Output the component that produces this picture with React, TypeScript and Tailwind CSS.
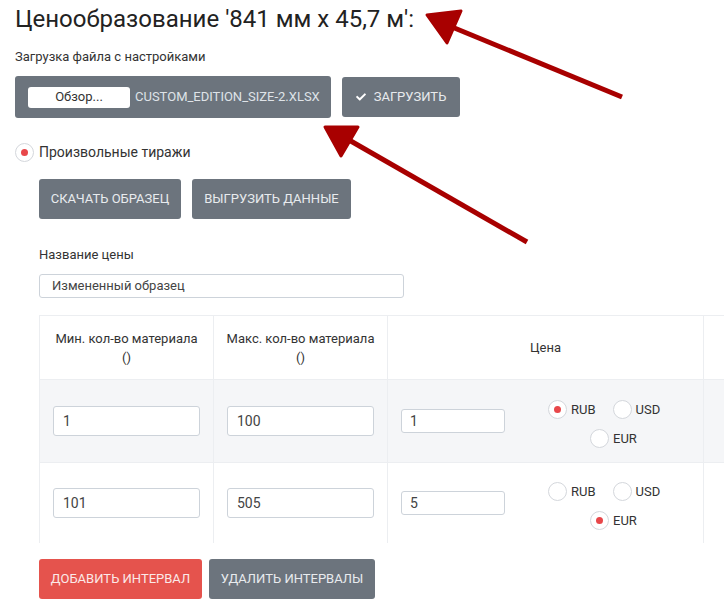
import React from "react";
import { FaCheck } from "react-icons/fa";

function Radio({ checked }: { checked?: boolean }) {
  return (
    <span className="flex h-[19px] w-[19px] shrink-0 items-center justify-center rounded-full border border-[#d4d7dc] bg-white">
      {checked && <span className="h-[7px] w-[7px] rounded-full bg-[#e8474a]" />}
    </span>
  );
}

function Cur({ label, checked }: { label: string; checked?: boolean }) {
  return (
    <span className="flex items-center gap-[4px]">
      <Radio checked={checked} />
      <span className="text-[13px] text-[#333]">{label}</span>
    </span>
  );
}

function Row({ a, b, c, cur, bg, h }: { a: string; b: string; c: string; cur: string; bg: string; h: string }) {
  return (
    <div className={`flex border-t border-[#eceef1] ${bg} ${h}`}>
      <div className="flex w-[174px] shrink-0 items-center border-l border-[#eceef1] px-[13px]">
        <div className="flex h-[30px] w-full items-center rounded-[3px] border border-[#cdd3da] bg-white px-[9px] text-[14px] text-[#444]">{a}</div>
      </div>
      <div className="flex w-[174px] shrink-0 items-center border-l border-[#eceef1] px-[13px]">
        <div className="flex h-[30px] w-full items-center rounded-[3px] border border-[#cdd3da] bg-white px-[9px] text-[14px] text-[#444]">{b}</div>
      </div>
      <div className="flex w-[316px] shrink-0 items-center border-l border-[#eceef1] pl-[13px]">
        <div className="flex h-[24px] w-[104px] items-center rounded-[3px] border border-[#cdd3da] bg-white px-[8px] text-[14px] text-[#444]">{c}</div>
        <div className="ml-[43px] mt-[6px] flex flex-col gap-[9px]">
          <div className="flex gap-[17px]">
            <Cur label="RUB" checked={cur === "RUB"} />
            <Cur label="USD" checked={cur === "USD"} />
          </div>
          <div className="flex pl-[42px]">
            <Cur label="EUR" checked={cur === "EUR"} />
          </div>
        </div>
      </div>
      <div className="w-[120px] shrink-0 border-l border-[#eceef1]" />
    </div>
  );
}

export default function App() {
  return (
    <div className="relative h-[615px] w-[724px] overflow-hidden bg-white pl-[15px]" style={{ fontFamily: "Roboto, 'Noto Sans', sans-serif" }}>
      <h1 className="text-[24px] leading-[38px] text-[#222]">Ценообразование '841 мм x 45,7 м':</h1>
      <div className="mt-[10px] text-[13px] leading-[18px] text-[#333]">Загрузка файла с настройками</div>

      <div className="mt-[10px] flex items-center gap-[11px]">
        <div className="flex h-[42px] w-[316px] items-center rounded-[3px] bg-[#6c747d] pl-[13px]">
          <div className="flex h-[21px] w-[102px] items-center justify-center rounded-[3px] bg-white text-[13px] text-[#333]">Обзор...</div>
          <span className="ml-[5px] text-[13px] text-[#dfe3e8]">CUSTOM_EDITION_SIZE-2.XLSX</span>
        </div>
        <div className="flex h-[40px] w-[118px] items-center justify-center gap-[8px] rounded-[3px] bg-[#6c747d] text-[13px] text-[#e8ebee]">
          <FaCheck className="h-[10px] w-[10px] text-white" />
          <span>ЗАГРУЗИТЬ</span>
        </div>
      </div>

      <div className="mt-[24px] flex items-center gap-[5px]">
        <Radio checked />
        <span className="text-[14px] text-[#333]">Произвольные тиражи</span>
      </div>

      <div className="ml-[24px] mt-[16px] flex gap-[11px]">
        <div className="flex h-[40px] w-[142px] items-center justify-center rounded-[3px] bg-[#6c747d] text-[13px] text-[#e8ebee]">СКАЧАТЬ ОБРАЗЕЦ</div>
        <div className="flex h-[40px] w-[159px] items-center justify-center rounded-[3px] bg-[#6c747d] text-[13px] text-[#e8ebee]">ВЫГРУЗИТЬ ДАННЫЕ</div>
      </div>

      <div className="ml-[24px] mt-[27px] text-[13px] leading-[18px] text-[#333]">Название цены</div>
      <div className="ml-[24px] mt-[10px] flex h-[24px] w-[365px] items-center rounded-[3px] border border-[#cdd3da] bg-white px-[12px] text-[13px] text-[#444]">Измененный образец</div>

      <div className="ml-[24px] mt-[17px] w-[800px]">
        <div className="flex h-[64px] border-t border-[#eceef1] text-[13px] leading-[19px] text-[#333]">
          <div className="flex w-[174px] shrink-0 flex-col items-center justify-center border-l border-[#eceef1]">
            <span>Мин. кол-во материала</span>
            <span>()</span>
          </div>
          <div className="flex w-[174px] shrink-0 flex-col items-center justify-center border-l border-[#eceef1]">
            <span>Макс. кол-во материала</span>
            <span>()</span>
          </div>
          <div className="flex w-[316px] shrink-0 items-center justify-center border-l border-[#eceef1]">Цена</div>
          <div className="w-[120px] shrink-0 border-l border-[#eceef1]" />
        </div>
        <Row a="1" b="100" c="1" cur="RUB" bg="bg-[#f5f6f8]" h="h-[83px]" />
        <Row a="101" b="505" c="5" cur="EUR" bg="bg-white" h="h-[81px]" />
      </div>

      <div className="ml-[24px] mt-[16px] flex gap-[7px]">
        <div className="flex h-[40px] w-[163px] items-center justify-center rounded-[3px] bg-[#e5534d] text-[13px] text-[#fbe9e8]">ДОБАВИТЬ ИНТЕРВАЛ</div>
        <div className="flex h-[40px] w-[166px] items-center justify-center rounded-[3px] bg-[#6c747d] text-[13px] text-[#e8ebee]">УДАЛИТЬ ИНТЕРВАЛЫ</div>
      </div>

      <svg className="pointer-events-none absolute left-0 top-0" width="724" height="615" viewBox="0 0 724 615">
        <line x1="452" y1="27" x2="622" y2="97" stroke="#a80000" strokeWidth="5" />
        <polygon points="427,15 461,11 447,43" fill="#a80000" stroke="#a80000" strokeWidth="3" strokeLinejoin="round" />
        <line x1="349" y1="140" x2="527" y2="242" stroke="#a80000" strokeWidth="5" />
        <polygon points="325,127 358,127 341,156" fill="#a80000" stroke="#a80000" strokeWidth="3" strokeLinejoin="round" />
      </svg>
    </div>
  );
}
